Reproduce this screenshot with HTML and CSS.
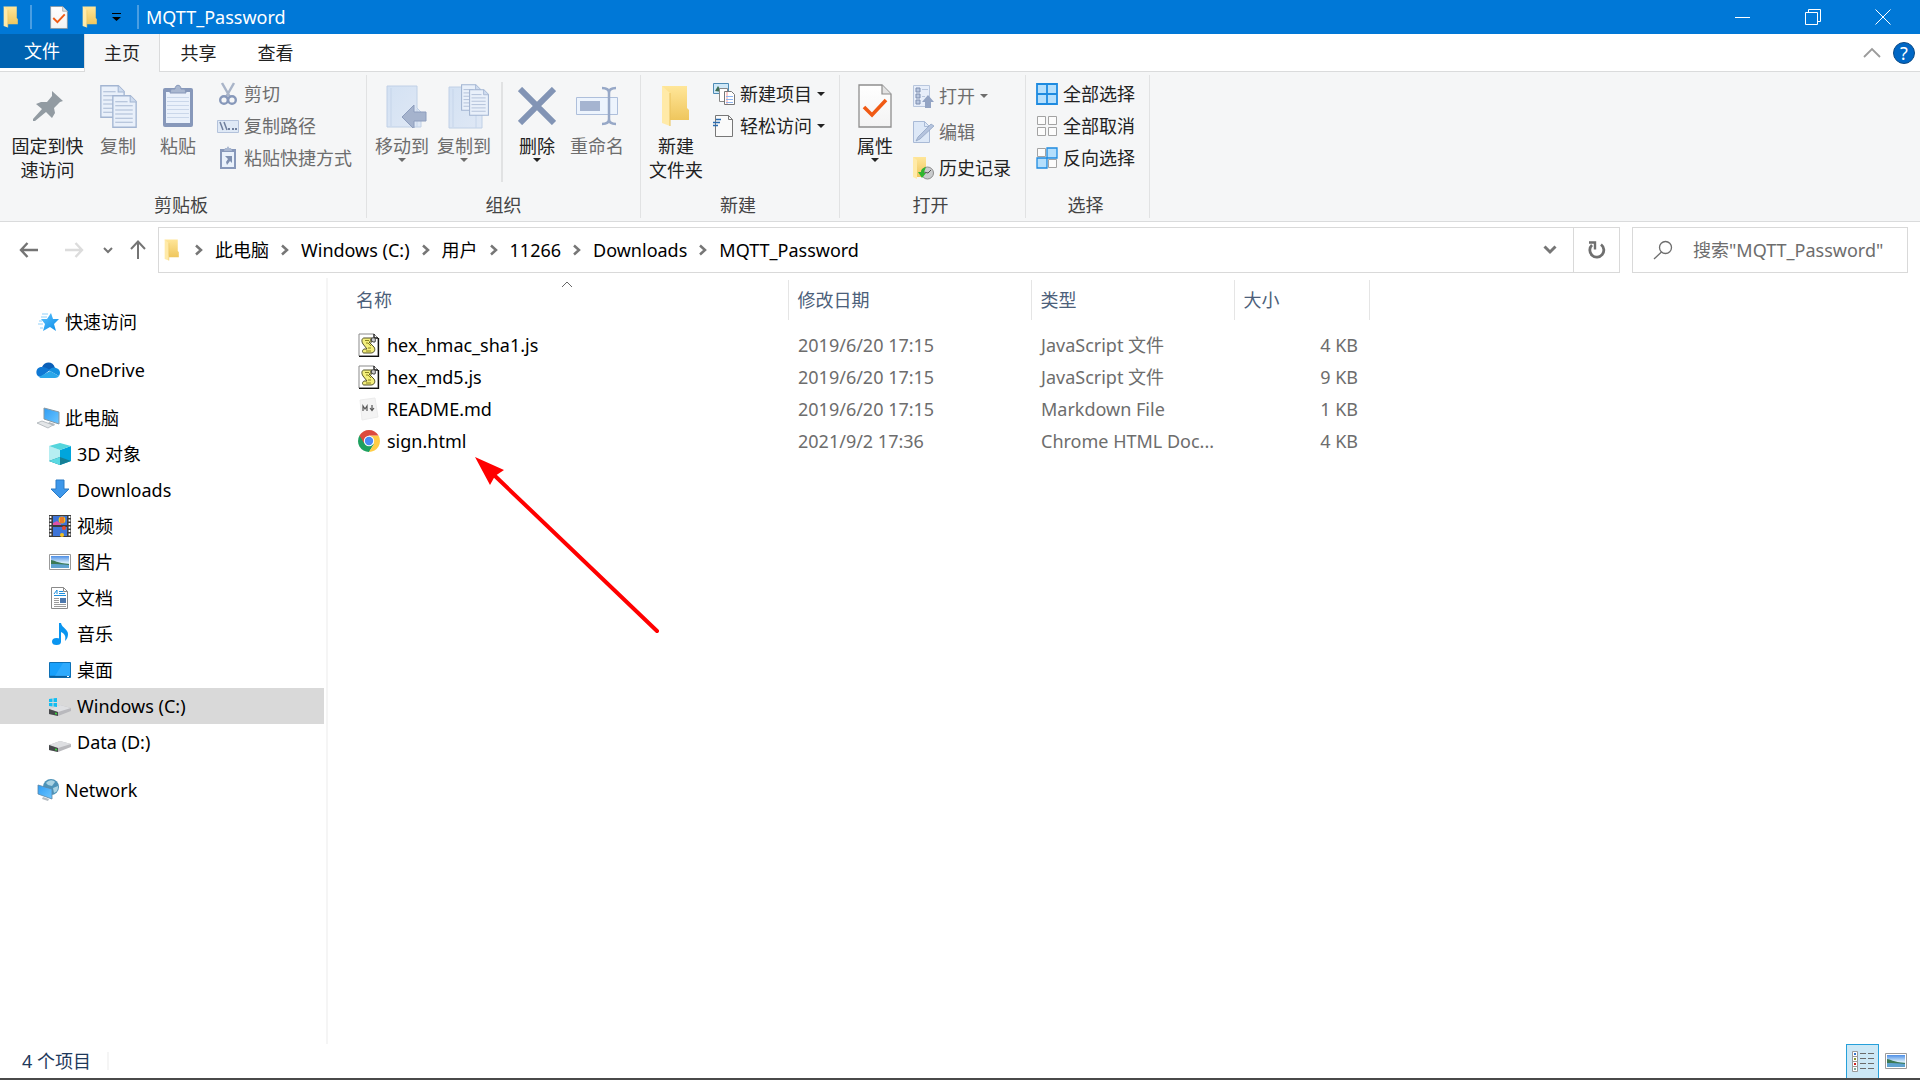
FILE: index.html
```
<!DOCTYPE html>
<html lang="zh-CN">
<head>
  <meta charset="UTF-8">
  <meta name="viewport" content="width=device-width, initial-scale=1.0">
  <title>MQTT_Password</title>
  <link rel="stylesheet" href="styles.css">
</head>
<body>
<!-- shared icons -->
<svg class="sprite" aria-hidden="true">
  <defs>
    <linearGradient id="gFolder" x1="0" y1="0" x2="0" y2="1">
      <stop offset="0" stop-color="#ffe699"/><stop offset="1" stop-color="#efc65d"/>
    </linearGradient>
    <linearGradient id="gStar" x1="0" y1="0" x2="1" y2="1">
      <stop offset="0" stop-color="#5cc3ff"/><stop offset="1" stop-color="#0a8be6"/>
    </linearGradient>
    <linearGradient id="gScreen" x1="0" y1="0" x2="1" y2="1">
      <stop offset="0" stop-color="#2f9df4"/><stop offset="1" stop-color="#6cc6ff"/>
    </linearGradient>
    <linearGradient id="gSky" x1="0" y1="0" x2="0" y2="1">
      <stop offset="0" stop-color="#4e8fe6"/><stop offset=".55" stop-color="#d5ecfa"/><stop offset="1" stop-color="#5b9bc4"/>
    </linearGradient>
    <linearGradient id="gPage" x1="0" y1="0" x2="0" y2="1">
      <stop offset="0" stop-color="#ffffff"/><stop offset="1" stop-color="#f3f3f3"/>
    </linearGradient>
    <linearGradient id="gBlue" x1="0" y1="0" x2="1" y2="1">
      <stop offset="0" stop-color="#d3e1f3"/><stop offset="1" stop-color="#dfe8f5"/>
    </linearGradient>
  </defs>
  <symbol id="folder" viewBox="0 0 30 42">
    <path d="M1 1h25v22l2 2v10l-19 0z" fill="url(#gFolder)"/>
    <path d="M1 1l8 7v33L1 38z" fill="#ffeaa8"/>
    <path d="M9 8v33" stroke="#e9c25c" fill="none"/>
  </symbol>
  <symbol id="checkpage" viewBox="0 0 34 44">
    <path d="M1 1h23l9 9v33H1z" fill="url(#gPage)" stroke="#8e8e8e" stroke-width="1.3"/>
    <path d="M24 1v9h9" fill="#e3e3e3" stroke="#8e8e8e" stroke-width="1.2"/>
    <path d="M6 23l8 8L28 16" fill="none" stroke="#f05a14" stroke-width="3.6"/>
  </symbol>
  <symbol id="chev" viewBox="0 0 8 12">
    <path d="M1 1.500l5 4.500-5 4.500" fill="none" stroke="#767676" stroke-width="2.500"/>
  </symbol>
  <symbol id="caret" viewBox="0 0 8 4"><path d="M0 0h8L4 4z" fill="currentColor"/></symbol>
  <symbol id="smallpage" viewBox="0 0 24 32">
    <path d="M.7.700h17l5.600 5.600v25H.7z" fill="#e9f0fa" stroke="#a3b5d2" stroke-width="1.300"/>
    <path d="M17.500.700v6h6" fill="#cfdcef" stroke="#a3b5d2"/>
    <path d="M3 6.500h12M3 10.500h17M3 14.500h17M3 18.500h17M3 22.500h17M3 26.500h17" stroke="#a9b9d4"/>
  </symbol>
  <symbol id="picture" viewBox="0 0 22 16">
    <path d="M.5.500h21v15H.5z" fill="#fff" stroke="#9a9a9a"/>
    <path d="M2 2h18v12H2z" fill="url(#gSky)"/>
    <path d="M2 6c3 0 6 3 18 4v1H2z" fill="#3c7a55"/>
    <path d="M2 10c6 0 12 0 18 1v3H2z" fill="#5fa3cf"/>
  </symbol>
  <symbol id="drive" viewBox="0 0 22 13">
    <path d="M0 5L11 1l11 3v3L9 12 0 10z" fill="#b9b9bd"/>
    <path d="M0 5L11 1l11 3L9 8z" fill="#dedfe2"/>
    <path d="M0 5l9 3v4L0 10z" fill="#46484b"/>
    <path d="M6 8.500l2 .6v1.500l-2-.4z" fill="#38d63c"/>
  </symbol>
  <symbol id="script" viewBox="0 0 22 24">
    <path d="M1 1h15l4 4v18H1z" fill="#fff" stroke="#8b8b8b"/>
    <path d="M16 1v4h4M20.500 5v18.500H1" fill="none" stroke="#111" stroke-width="1.300"/>
    <path d="M6 5h8c-2 1-2 3 0 4h-3l5 5c2 3 0 6-3 6H6c-2 0-2-3 0-4h3L5 11c-2-3-1-6 1-6z" fill="#f3ee7b" stroke="#55532c"/>
    <path d="M7 7.500h4M8 10h2l3 3M10 15h3M8 18h5" fill="none" stroke="#8b8420"/>
    <path d="M14 5c3-1 4 1 3 4h-2c-2-1-2-3-1-4z" fill="#ccc" stroke="#444"/>
  </symbol>
</svg>

<div class="window">
  <header class="titlebar">
    <svg class="ico-folder"><use href="#folder"/></svg>
    <span class="tb-sep"></span>
    <button class="tb-btn" aria-label="属性"><svg width="18" height="23"><use href="#checkpage"/></svg></button>
    <button class="tb-btn" aria-label="新建文件夹"><svg class="ico-folder"><use href="#folder"/></svg></button>
    <button class="tb-btn" aria-label="自定义快速访问工具栏">
      <svg width="9" height="8" viewBox="0 0 9 8"><path d="M0 .500h9" stroke="#000"/><path d="M0 4h9L4.500 8z" fill="#000"/></svg>
    </button>
    <span class="tb-sep"></span>
    <h1>MQTT_Password</h1>
    <div class="win-buttons">
      <button aria-label="最小化"><svg width="16" height="16" viewBox="0 0 16 16"><path d="M0 8.500h15"/></svg></button>
      <button aria-label="还原"><svg width="16" height="16" viewBox="0 0 16 16"><path d="M.5 3.500h12v12H.5zM3.500 3.500v-3h12v12h-3"/></svg></button>
      <button aria-label="关闭"><svg width="16" height="16" viewBox="0 0 16 16"><path d="M.5.500l15 15M15.500.500l-15 15"/></svg></button>
    </div>
  </header>

  <nav class="tabs">
    <button class="tab file">文件</button>
    <button class="tab active">主页</button>
    <button class="tab">共享</button>
    <button class="tab">查看</button>
    <div class="tab-tools">
      <button aria-label="最小化功能区"><svg width="18" height="11" viewBox="0 0 18 11"><path d="M1 10l8-8 8 8" fill="none" stroke="#9b9b9b" stroke-width="1.800"/></svg></button>
      <button class="help" aria-label="帮助">?</button>
    </div>
  </nav>

  <section class="ribbon">
    <div class="group">
      <div class="group-body">
        <button class="big wide">
          <span class="big-icon"><svg width="32" height="32" viewBox="0 0 32 32"><path d="M20 1l11 10-3 1-1 1-5 5 1 5-3 5-6-6L3 31l-2 0 0-2 9-10-6-5 5-2 6 0 5-6z" fill="#929ba2"/></svg></span>
          <span>固定到快<br>速访问</span>
        </button>
        <button class="big narrow" disabled>
          <span class="big-icon"><svg width="38" height="44" viewBox="0 0 38 44"><use href="#smallpage" x="1" y="1" width="25" height="33"/><use href="#smallpage" x="13" y="11" width="25" height="33"/></svg></span>
          <span>复制</span>
        </button>
        <button class="big roomy" disabled>
          <span class="big-icon"><svg width="32" height="44" viewBox="0 0 32 44"><rect x="1" y="4" width="30" height="39" rx="2" fill="#8798ba"/><path d="M4 8h24v31H4z" fill="#eaf1fb"/><path d="M5 13.500h22M5 17.500h22M5 21.500h22M5 25.500h22M5 29.500h22M5 33.500h22" stroke="#cad7ea"/><path d="M8 9l1-4h4c0-5 6-5 6 0h4l1 4z" fill="#a9b7d0" stroke="#8798ba"/></svg></span>
          <span>粘贴</span>
        </button>
        <div class="small-col">
          <button class="small" disabled>
            <svg viewBox="0 0 22 24"><path d="M5 1l8 14M17 1L9 15" stroke="#a9b4c8" stroke-width="2.500"/><circle cx="7" cy="18" r="3.800" fill="none" stroke="#8798ba" stroke-width="2.400"/><circle cx="15" cy="18" r="3.800" fill="none" stroke="#8798ba" stroke-width="2.400"/></svg>
            剪切
          </button>
          <button class="small" disabled>
            <svg viewBox="0 0 22 24"><path d="M.5 6.500h21v12H.5z" fill="#dfe9f6" stroke="#b3c2db"/><path d="M3 8l3 8M7 8l3 8" stroke="#6f7f9d" stroke-width="1.500"/><path d="M11 15h2M15 15h2M18 15h2" stroke="#6f7f9d" stroke-width="2"/></svg>
            复制路径
          </button>
          <button class="small" disabled>
            <svg viewBox="0 0 22 24"><path d="M3 3h16v20H3z" fill="#8798ba"/><path d="M5 6h12v15H5z" fill="#e9f1fb"/><path d="M7 5l1-3h2c0-2 2-2 2 0h2l1 3z" fill="#a9b7d0"/><path d="M8 10h7v7l-2-2-3 4-1-3 2-3z" fill="#7f90b0"/></svg>
            粘贴快捷方式
          </button>
        </div>
      </div>
      <div class="group-name">剪贴板</div>
    </div>

    <div class="group organize">
      <div class="group-body">
        <button class="big" disabled>
          <span class="big-icon"><svg width="50" height="44" viewBox="-6 0 50 44"><path d="M4 2h30v22l4 4v15H4z" fill="url(#gBlue)" stroke="#c0d0e6"/><path d="M8 4v38M34 25v18" stroke="#c6d5ea"/><path d="M19 33L31 21v7h12v9H31v8z" fill="#a5b3cd" stroke="#8d9dbd"/></svg></span>
          <span>移动到</span>
          <svg class="caret"><use href="#caret"/></svg>
        </button>
        <button class="big" disabled>
          <span class="big-icon"><svg width="50" height="46" viewBox="-6 0 50 46"><path d="M4 4h27v22l6 3v16H4z" fill="url(#gBlue)" stroke="#c0d0e6"/><path d="M8 6v38M31 29v16" stroke="#c6d5ea"/><use href="#smallpage" x="16" y="1" width="20" height="27"/><use href="#smallpage" x="24" y="6" width="20" height="27"/></svg></span>
          <span>复制到</span>
          <svg class="caret"><use href="#caret"/></svg>
        </button>
        <span class="v-line"></span>
        <button class="big narrow">
          <span class="big-icon"><svg width="38" height="38" viewBox="0 0 38 38"><path d="M2 2l34 34M36 2L2 36" stroke="#8294b5" stroke-width="6"/></svg></span>
          <span>删除</span>
          <svg class="caret"><use href="#caret"/></svg>
        </button>
        <button class="big roomy" disabled>
          <span class="big-icon"><svg width="44" height="40" viewBox="0 0 44 40"><path d="M1.500 11.500h41v17h-41z" fill="#edf4fd" stroke="#aebfdb"/><path d="M5 15h20v10H5z" fill="#a5b4d0"/><path d="M27 2c5 0 7 2 7 5 0-3 2-5 7-5M34 6v28M27 38c5 0 7-2 7-5 0 3 2 5 7 5" fill="none" stroke="#97a8c7" stroke-width="2.500"/></svg></span>
          <span>重命名</span>
        </button>
      </div>
      <div class="group-name">组织</div>
    </div>

    <div class="group">
      <div class="group-body">
        <button class="big">
          <span class="big-icon"><svg width="30" height="42"><use href="#folder"/></svg></span>
          <span>新建<br>文件夹</span>
        </button>
        <div class="small-col">
          <button class="small">
            <svg viewBox="0 0 22 24"><path d="M.5 1.500h15v10H.5z" fill="#cfe8f8" stroke="#4e8bb5"/><path d="M2 9l3-5 4 6z" fill="#3d6e56"/><path d="M6.500 6.500h8v13h-8z" fill="#fff" stroke="#888"/><path d="M11.500 9.500h7l3 3v10h-10z" fill="#fff" stroke="#777"/><path d="M14 10v12" stroke="#f49a9a"/><path d="M13 14.500h7M13 17.500h7M13 20.500h7" stroke="#8fb5ef"/></svg>
            新建项目 <svg class="caret"><use href="#caret"/></svg>
          </button>
          <button class="small">
            <svg viewBox="0 0 22 24"><path d="M2.500 1.500h13l4 4v17h-17z" fill="#fafafa" stroke="#777"/><path d="M15.500 1.500v4h4" fill="none" stroke="#777"/><path d="M3 5.500h5M0 8.500h7M0 11.500h5" stroke="#2b6cb0" stroke-width="1.500"/></svg>
            轻松访问 <svg class="caret"><use href="#caret"/></svg>
          </button>
        </div>
      </div>
      <div class="group-name">新建</div>
    </div>

    <div class="group">
      <div class="group-body">
        <button class="big">
          <span class="big-icon"><svg width="34" height="44"><use href="#checkpage"/></svg></span>
          <span>属性</span>
          <svg class="caret"><use href="#caret"/></svg>
        </button>
        <div class="small-col loose">
          <button class="small" disabled>
            <svg viewBox="0 0 22 24"><path d="M1.500 1.500h16v21h-16z" fill="#e7eefa" stroke="#b8c6dd"/><path d="M4 4h4v4H4zM4 10h4v4H4zM4 16h4v4H4z" fill="#b9c7e0" stroke="#7e8fb0"/><path d="M10 5.500h6M10 12.500h3" stroke="#b8c6dd"/><path d="M10 18l6-7 6 7h-3v6h-6v-6z" fill="#93a4c4"/></svg>
            打开 <svg class="caret"><use href="#caret"/></svg>
          </button>
          <button class="small" disabled>
            <svg viewBox="0 0 22 24"><path d="M1.500 1.500h11l5 5v16h-16z" fill="#dde8f7" stroke="#a9bad6"/><path d="M12.500 1.500v5h5" fill="none" stroke="#a9bad6"/><path d="M4 21l2-4L19 4l3 2L8 19z" fill="#b4c3dd" stroke="#92a4c4" stroke-width=".8"/></svg>
            编辑
          </button>
          <button class="small">
            <svg viewBox="0 0 22 24"><path d="M1 1h13v20l-9 0z" fill="url(#gFolder)"/><path d="M1 1l4 3v19l-4-2z" fill="#ffeaa8"/><circle cx="15.500" cy="17" r="6" fill="#c9cbcd" stroke="#8c8c8c"/><path d="M12 16l4 1 3-3" fill="none" stroke="#555"/><path d="M6 16h3c0-3 2-4 5-5-1 3-2 4-2 6h2l-4 5z" fill="#2fb52f"/></svg>
            历史记录
          </button>
        </div>
      </div>
      <div class="group-name">打开</div>
    </div>

    <div class="group">
      <div class="group-body">
        <div class="small-col">
          <button class="small">
            <svg viewBox="0 0 22 22"><path d="M1 1h20v20H1zM11 1v20M1 11h20" fill="#b5dffc" stroke="#1e8be0" stroke-width="1.800"/></svg>
            全部选择
          </button>
          <button class="small">
            <svg viewBox="0 0 22 22"><path d="M1.500 1.500h8v8h-8zM12.500 1.500h8v8h-8zM1.500 12.500h8v8h-8zM12.500 12.500h8v8h-8z" fill="#fcfcfc" stroke="#a3a3a3"/></svg>
            全部取消
          </button>
          <button class="small">
            <svg viewBox="0 0 22 22"><path d="M1.500 1.500h8v8h-8zM12.500 12.500h8v8h-8z" fill="#fcfcfc" stroke="#a3a3a3"/><path d="M11 1h10v10H11zM1 11h10v10H1z" fill="#b5dffc" stroke="#1e8be0" stroke-width="1.300"/></svg>
            反向选择
          </button>
        </div>
      </div>
      <div class="group-name">选择</div>
    </div>
  </section>

  <div class="address-row">
    <div class="nav-buttons">
      <button aria-label="后退"><svg width="20" height="16" viewBox="0 0 20 16"><path d="M19 8H2M8.500 1L2 8l6.500 7" fill="none" stroke="#747474" stroke-width="2.400"/></svg></button>
      <button aria-label="前进" disabled><svg width="20" height="16" viewBox="0 0 20 16"><path d="M1 8h17M11.500 1L18 8l-6.500 7" fill="none" stroke="#dcdcdc" stroke-width="2.400"/></svg></button>
      <button class="recent" aria-label="最近浏览的位置"><svg width="10" height="7" viewBox="0 0 10 7"><path d="M1 1l4 4 4-4" fill="none" stroke="#747474" stroke-width="2"/></svg></button>
      <button class="up" aria-label="上移"><svg width="16" height="20" viewBox="0 0 16 20"><path d="M8 19V2M1 9l7-7.500L15 9" fill="none" stroke="#747474" stroke-width="2"/></svg></button>
    </div>
    <div class="address">
      <svg class="ico-folder"><use href="#folder"/></svg>
      <ol class="crumbs">
        <li><svg class="chev"><use href="#chev"/></svg><a href="#">此电脑</a></li>
        <li><svg class="chev"><use href="#chev"/></svg><a href="#">Windows (C:)</a></li>
        <li><svg class="chev"><use href="#chev"/></svg><a href="#">用户</a></li>
        <li><svg class="chev"><use href="#chev"/></svg><a href="#">11266</a></li>
        <li><svg class="chev"><use href="#chev"/></svg><a href="#">Downloads</a></li>
        <li><svg class="chev"><use href="#chev"/></svg><a href="#">MQTT_Password</a></li>
      </ol>
      <button class="history" aria-label="以前的位置"><svg width="14" height="10" viewBox="0 0 14 10"><path d="M1.500 1.500L7 7l5.500-5.500" fill="none" stroke="#767676" stroke-width="3"/></svg></button>
      <button class="refresh" aria-label="刷新"><svg width="18" height="18" viewBox="0 0 18 18"><path d="M13 3.500A7 7 0 1 1 4 4" fill="none" stroke="#6f6f6f" stroke-width="2.800"/><path d="M1 1.500h6v7" fill="none" stroke="#6f6f6f" stroke-width="2.400"/></svg></button>
    </div>
    <label class="search">
      <svg width="20" height="20" viewBox="0 0 20 20"><circle cx="12.500" cy="7.500" r="6" fill="none" stroke="#6d6d6d" stroke-width="1.300"/><path d="M8.500 12L1 19" stroke="#6d6d6d" stroke-width="1.300"/></svg>
      <input type="text" placeholder='搜索"MQTT_Password"' aria-label="搜索">
    </label>
  </div>

  <main class="content">
    <nav class="sidebar">
      <ul>
        <li><a href="#"><svg viewBox="0 0 24 24"><path d="M15 3l2 6h6l-5 5 2 7-6-4-7 4 2-7-4-5h6z" fill="url(#gStar)"/><path d="M6 4h6M5 7h6M3 11h3M2 14h5M4 18h3" stroke="#8fd0fa"/></svg>快速访问</a></li>
      </ul>
      <ul>
        <li><a href="#"><svg viewBox="0 0 24 24"><path d="M6 9c3-6 11-6 13 1l-7 3z" fill="#0a5fb8"/><path d="M1 17c-2-5 1-8 5-8 3 0 5 1 8 3l-9 7c-2 0-3-1-4-2z" fill="#0f78d4"/><path d="M13 12c2-2 4-3 7-2 4 1 5 5 3 8l-9-5z" fill="#1490df"/><path d="M3 19l11-6 9 5c-1 1-2 2-4 2H6c-1 0-2 0-3-1z" fill="#2aa7ea"/></svg>OneDrive</a></li>
      </ul>
      <ul>
        <li><a href="#"><svg viewBox="0 0 24 24"><path d="M8 2l15 4v12L8 13z" fill="url(#gScreen)" stroke="#8798a3"/><path d="M13 16l6 2-1 2-6-2z" fill="#b3bbc1"/><path d="M1 17l5-2 11 4-5 3z" fill="#e3e6e8" stroke="#a9b0b5" stroke-width=".8"/></svg>此电脑</a></li>
        <li><a class="child" href="#"><svg viewBox="0 0 22 24"><path d="M0 4l11 4v15L0 19z" fill="#b6eef2"/><path d="M22 4L11 8v15l11-4z" fill="#00a5dc"/><path d="M0 4l11-3 11 3-11 4z" fill="#55d5dc"/><path d="M0 19l11-4 11 4-11 4z" fill="#157f95"/><path d="M0 19l11-4v8z" fill="#5ad9e2"/></svg>3D 对象</a></li>
        <li><a class="child" href="#"><svg viewBox="0 0 22 24"><path d="M7 2h8v9h5l-9 9-9-9h5z" fill="#3d97ea" stroke="#2a7ac5"/></svg>Downloads</a></li>
        <li><a class="child" href="#"><svg viewBox="0 0 22 24"><path d="M0 1h22v22H0z" fill="#3c3c3c"/><path d="M4 2h14v9H4zM4 13h14v9H4z" fill="#3d74d8"/><path d="M1.500 2v21M20.500 2v21" stroke="#fff" stroke-width="1.800" stroke-dasharray="2 1.500"/><path d="M4 9l4-2 4 3v1H4z" fill="#e052a8"/><circle cx="13" cy="6" r="3.400" fill="#f2c11f"/><path d="M12 3v6M14 3v6" stroke="#d33"/><circle cx="15" cy="14" r="2" fill="#e4462f"/><circle cx="13" cy="21" r="2" fill="#f2c11f"/></svg>视频</a></li>
        <li><a class="child" href="#"><svg viewBox="0 0 22 16"><use href="#picture"/></svg>图片</a></li>
        <li><a class="child" href="#"><svg viewBox="0 0 22 24"><path d="M2.500 1.500h12l4 4v17h-16z" fill="#fff" stroke="#8a8a8a"/><path d="M14.500 1.500v4h4" fill="none" stroke="#8a8a8a"/><path d="M5 8l3-4v4M10 5.500h4M10 7.500h6M5 9.500h12" fill="none" stroke="#1f8fdc"/><path d="M11 12h6v5h-6z" fill="#4d78ad"/><path d="M5 12.500h5M5 14.500h5M5 16.500h5M5 18.500h12M5 20.500h12" stroke="#9c9c9c"/></svg>文档</a></li>
        <li><a class="child" href="#"><svg viewBox="0 0 22 24"><ellipse cx="7.500" cy="19.500" rx="4.500" ry="3.500" fill="#0a95f0"/><path d="M10 20V1h2c1 5 7 6 7 11 0 3-1 5-3 7 1-5 0-7-4-9v10z" fill="#0a95f0"/></svg>音乐</a></li>
        <li><a class="child" href="#"><svg viewBox="0 0 22 24"><path d="M.5 4.500h21v15H.5z" fill="#18a0fb" stroke="#0e70b5"/><path d="M1 18.500h20" stroke="#0b5d9a" stroke-width="1.500"/><path d="M14 5l-8 13h15V5z" fill="#3db1ff" opacity=".6"/><path d="M18 18.500h2" stroke="#fff"/></svg>桌面</a></li>
        <li><a class="child selected" href="#"><svg viewBox="0 0 22 24"><use href="#drive" y="10" width="22" height="13"/><path d="M0 5l3.500-.5V8H0zM4.500 4.300L8 4v4H4.500zM0 9h3.500v3.500L0 12zM4.500 9H8v4l-3.500-.4z" fill="#12bdf2"/></svg>Windows (C:)</a></li>
        <li><a class="child" href="#"><svg viewBox="0 0 22 24"><use href="#drive" y="10" width="22" height="13"/></svg>Data (D:)</a></li>
      </ul>
      <ul>
        <li><a href="#"><svg viewBox="0 0 24 24"><circle cx="15" cy="9" r="8" fill="#4d93b8"/><path d="M10 5c3-4 8-3 9-1l-3 4-4-1zM17 10l5-2c0 4-1 6-4 7z" fill="#a9d3e3"/><path d="M2 7l14 4v10L2 16z" fill="url(#gScreen)" stroke="#5d87a5" stroke-width=".8"/><path d="M7 19l6 2-1 2-6-2z" fill="#b4bcc2"/></svg>Network</a></li>
      </ul>
    </nav>

    <section class="files">
      <table>
        <colgroup><col class="c-name"><col class="c-date"><col class="c-type"><col class="c-size"></colgroup>
        <thead>
          <tr>
            <th>名称<svg class="sort" width="12" height="7" viewBox="0 0 12 7"><path d="M1 6l5-5 5 5" fill="none" stroke="#666"/></svg></th>
            <th>修改日期</th>
            <th>类型</th>
            <th>大小</th>
          </tr>
        </thead>
        <tbody>
          <tr>
            <td><a href="#"><svg viewBox="0 0 22 24"><use href="#script"/></svg>hex_hmac_sha1.js</a></td>
            <td>2019/6/20 17:15</td><td>JavaScript 文件</td><td>4 KB</td>
          </tr>
          <tr>
            <td><a href="#"><svg viewBox="0 0 22 24"><use href="#script"/></svg>hex_md5.js</a></td>
            <td>2019/6/20 17:15</td><td>JavaScript 文件</td><td>9 KB</td>
          </tr>
          <tr>
            <td><a href="#"><svg viewBox="0 0 22 24"><path d="M2 3l15-2 3 19-16 3z" fill="#f3f3f3" stroke="#ececec"/><path d="M5 14V9l2 3 2-3v5M14 8v5M12 11l2 2.500 2-2.500" fill="none" stroke="#555" stroke-width="1.200"/></svg>README.md</a></td>
            <td>2019/6/20 17:15</td><td>Markdown File</td><td>1 KB</td>
          </tr>
          <tr>
            <td><a href="#"><svg viewBox="0 0 22 24"><path d="M11 12L1.500 6.500A11 11 0 0 0 11 23l5-8z" fill="#1da05f"/><path d="M11 6.500h9.500A11 11 0 0 1 11 23l5-8z" fill="#ffcd46"/><path d="M1.500 6.500A11 11 0 0 1 20.500 6.500H11L6 14z" fill="#dd4b3e"/><circle cx="11" cy="12" r="5.200" fill="#fff"/><circle cx="11" cy="12" r="4.200" fill="#4a8af4"/></svg>sign.html</a></td>
            <td>2021/9/2 17:36</td><td>Chrome HTML Doc...</td><td>4 KB</td>
          </tr>
        </tbody>
      </table>
      <!-- red pointer to sign.html -->
      <svg class="pointer" width="186" height="178" viewBox="0 0 186 178">
        <path d="M183 175L20 19" stroke="#f00" stroke-width="4" stroke-linecap="round"/>
        <path d="M1 1l29 13-9 6-5 9z" fill="#f00"/>
      </svg>
    </section>
  </main>

  <footer class="statusbar">
    <span class="count">4 个项目</span>
    <div class="views">
      <button class="view on" aria-label="详细信息"><svg width="22" height="22" viewBox="0 0 22 22"><path d="M.5.500h5v5h-5zM.5 5.500h5v5h-5zM.5 10.500h5v5h-5zM.5 15.500h5v5h-5z" fill="#fff" stroke="#999"/><path d="M2 3h2" stroke="#37c" stroke-width="2"/><path d="M2 8h2" stroke="#893" stroke-width="2"/><path d="M2 13h2" stroke="#c22" stroke-width="2"/><path d="M2 18h2" stroke="#7a9" stroke-width="2"/><path d="M8 2.500h6M16 2.500h6M8 7.500h6M16 7.500h6M8 12.500h6M16 12.500h6M8 17.500h6M16 17.500h6" stroke="#6b6b6b"/></svg></button>
      <button class="view" aria-label="大缩略图"><svg width="22" height="16"><use href="#picture"/></svg></button>
    </div>
  </footer>
</div>
</body>
</html>
```
FILE: styles.css
```
* {
  box-sizing: border-box;
}
body {
  margin: 0;
  font-family: "Noto Sans", "Noto Sans CJK SC", sans-serif;
  font-size: 18px;
  line-height: 24px;
  color: #000;
  background: #fff;
}
button {
  border: 0;
  padding: 0;
  background: none;
  font: inherit;
  color: inherit;
}
a {
  color: inherit;
  text-decoration: none;
}
ul, ol {
  list-style: none;
  margin: 0;
  padding: 0;
}
svg {
  display: block;
  flex-shrink: 0;
}
.sprite {
  position: absolute;
  width: 0;
  height: 0;
}
.window {
  display: flex;
  flex-direction: column;
  min-height: 100vh;
}
.ico-folder {
  width: 16px;
  height: 22px;
}

/* title bar */
.titlebar {
  display: flex;
  align-items: center;
  height: 34px;
  padding: 0 2px 0 3px;
  background: #0078d7;
  color: #fff;
}
.tb-sep {
  width: 2px;
  height: 24px;
  margin-left: 11px;
  background: #4a9ee2;
}
.tb-btn {
  margin-left: 14px;
}
.tb-sep + .tb-btn {
  margin-left: 18px;
}
.titlebar .tb-sep:nth-of-type(2) {
  margin-left: 16px;
}
.titlebar h1 {
  margin: 0 0 0 7px;
  font-size: 18px;
  font-weight: 400;
}
.win-buttons {
  display: flex;
  margin-left: auto;
}
.win-buttons button {
  display: flex;
  align-items: center;
  justify-content: center;
  width: 70px;
  height: 34px;
}
.win-buttons path {
  fill: none;
  stroke: #fff;
}

/* tabs */
.tabs {
  display: flex;
  align-items: stretch;
  height: 38px;
  border-bottom: 1px solid #dadbdc;
  color: #222;
}
.tab {
  width: 77px;
}
.tab.file {
  width: 84px;
  height: 34px;
  background: #0063b1;
  color: #fff;
}
.tab.active {
  width: 76px;
  height: 38px;
  border: 1px solid #dadbdc;
  border-top: 0;
  border-bottom: 0;
  background: #f5f6f7;
}
.tab-tools {
  display: flex;
  align-items: center;
  gap: 12px;
  margin-left: auto;
  padding-right: 5px;
}
.help {
  width: 22px;
  height: 22px;
  border: 1px solid #0b4a86;
  border-radius: 50%;
  background: #0067c5;
  color: #fff;
  line-height: 20px;
}

/* ribbon */
.ribbon {
  display: flex;
  height: 150px;
  padding: 3px 0;
  border-bottom: 1px solid #dadbdc;
  background: #f5f6f7;
  color: #222;
}
.group {
  display: flex;
  flex-direction: column;
  justify-content: space-between;
  padding: 3px 14px 1px 4px;
  border-right: 1px solid #e1e2e3;
}
.group.organize {
  padding-right: 10px;
}
.group-body {
  display: flex;
  align-items: flex-start;
}
.group-name {
  padding-left: 6px;
  text-align: center;
  color: #444;
}
.ribbon button:disabled {
  color: #6d6d6d;
}
.big {
  display: flex;
  flex-direction: column;
  align-items: center;
  width: 62px;
  padding-top: 4px;
  white-space: nowrap;
}
.big.wide {
  width: 87px;
}
.big.roomy {
  width: 66px;
}
.big.narrow {
  width: 54px;
}
.big-icon {
  display: flex;
  align-items: center;
  height: 48px;
  margin-bottom: 4px;
}
.caret {
  width: 8px;
  height: 4px;
}
.v-line {
  width: 2px;
  height: 100px;
  margin: 4px 7px 0 6px;
  background: #e1e2e3;
}
.small-col {
  padding-left: 6px;
}
.small {
  display: flex;
  align-items: center;
  gap: 5px;
  height: 32px;
  white-space: nowrap;
}
.loose .small {
  height: 36px;
}
.small > svg:first-child {
  width: 22px;
  height: 24px;
}

/* address bar */
.address-row {
  display: flex;
  gap: 12px;
  padding: 5px 12px 5px 0;
}
.nav-buttons {
  display: flex;
  align-items: center;
  gap: 19px;
  padding-left: 19px;
}
.nav-buttons button + button {
  margin-left: 6px;
}
.nav-buttons .recent,
.nav-buttons .up {
  margin-left: 0;
}
.nav-buttons .up {
  margin-left: -2px;
}
.address {
  display: flex;
  align-items: center;
  flex: 1;
  height: 46px;
  padding-left: 5px;
  border: 1px solid #d9d9d9;
}
.crumbs {
  display: flex;
  flex: 1;
  padding-left: 3px;
}
.crumbs li {
  display: flex;
  align-items: center;
}
.chev {
  width: 8px;
  height: 12px;
  margin: 0 12px;
}
.history,
.refresh {
  display: flex;
  align-items: center;
  justify-content: center;
  width: 46px;
  height: 44px;
}
.refresh {
  border-left: 1px solid #d9d9d9;
}
.search {
  display: flex;
  align-items: center;
  gap: 20px;
  width: 276px;
  height: 46px;
  padding-left: 20px;
  border: 1px solid #d9d9d9;
}
.search input {
  flex: 1;
  min-width: 0;
  border: 0;
  padding: 0;
  outline: 0;
  font: inherit;
}
.search input::placeholder {
  color: #6d6d6d;
  opacity: 1;
}

/* folder tree */
.content {
  display: flex;
  flex: 1;
}
.sidebar {
  width: 328px;
  padding: 26px 2px 0 0;
  border-right: 2px solid #f5f5f5;
}
.sidebar ul + ul {
  margin-top: 12px;
}
.sidebar a {
  display: flex;
  align-items: center;
  gap: 5px;
  height: 36px;
  padding-left: 36px;
}
.sidebar svg {
  width: 24px;
  height: 24px;
}
.sidebar a.child {
  gap: 6px;
  padding-left: 49px;
}
.sidebar .child svg {
  width: 22px;
}
.sidebar .selected {
  background: #d9d9d9;
}

/* file list */
.files {
  position: relative;
  flex: 1;
  padding: 2px 0 0 15px;
}
table {
  table-layout: fixed;
  width: 1026px;
  border-collapse: collapse;
}
.c-name { width: 445px; }
.c-date { width: 243px; }
.c-type { width: 203px; }
.c-size { width: 135px; }
th {
  position: relative;
  height: 40px;
  padding: 0 9px;
  border-right: 1px solid #e5e5e5;
  text-align: left;
  font-weight: 400;
  color: #4c607a;
}
th:first-child {
  padding-left: 13px;
}
.sort {
  position: absolute;
  top: 1px;
  left: 49%;
}
tbody::before {
  content: "";
  display: block;
  height: 9px;
}
td {
  height: 32px;
  padding: 0 10px;
  color: #6d6d6d;
  white-space: nowrap;
}
td:first-child {
  padding-left: 15px;
  color: #000;
}
td:last-child {
  padding-right: 11px;
  text-align: right;
}
td a {
  display: flex;
  align-items: center;
  gap: 7px;
}
td svg {
  width: 22px;
  height: 24px;
}
.pointer {
  position: absolute;
  left: 146px;
  top: 178px;
}

/* status bar */
.statusbar {
  display: flex;
  justify-content: space-between;
  align-items: center;
  height: 36px;
  border-bottom: 2px solid #4a4a4a;
  color: #1e395b;
}
.count {
  margin-left: 22px;
  padding-right: 16px;
  border-right: 2px solid #f5f5f5;
  line-height: 18px;
}
.views {
  display: flex;
  padding-right: 8px;
}
.view {
  display: flex;
  align-items: center;
  justify-content: center;
  width: 33px;
  height: 34px;
}
.view.on {
  border: 1px solid #26a0da;
  border-bottom: 0;
  background: #cce8f6;
}
```
